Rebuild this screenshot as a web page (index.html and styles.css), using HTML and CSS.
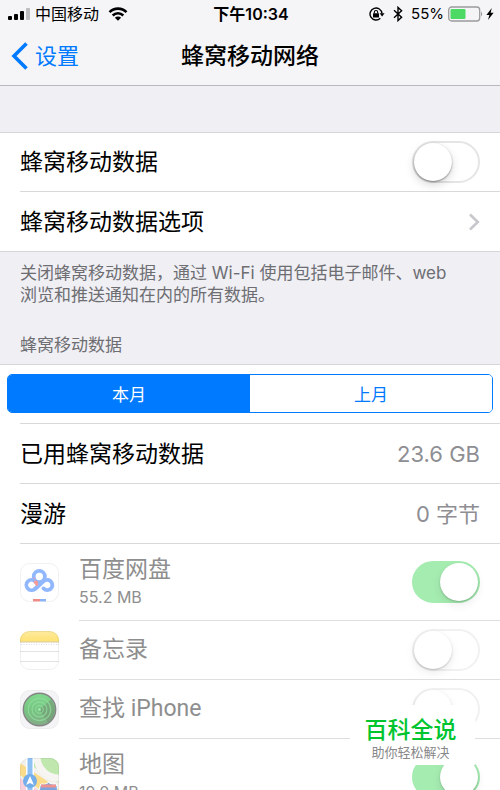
FILE: index.html
```html
<!DOCTYPE html>
<html lang="zh-CN">
<head>
    <meta charset="UTF-8">
    <meta name="viewport" content="width=device-width, initial-scale=1.0">
    <title>蜂窝移动网络</title>
    <link rel="stylesheet" href="styles.css">
</head>
<body>
    <header>
        <div class="status-bar">
            <div class="status-left">
                <svg width="22" height="14" viewBox="0 0 22 14">
                    <rect x="0" y="9" width="4" height="4" rx="1"/>
                    <rect x="6" y="7" width="4" height="6" rx="1"/>
                    <rect x="12" y="4" width="4" height="9" rx="1"/>
                    <rect x="18" y="1" width="4" height="12" rx="1" fill="#bcbcbe"/>
                </svg>
                <span class="carrier">中国移动</span>
                <svg width="20" height="14" viewBox="0 0 20 14" fill="none" stroke="#000" stroke-width="2.6">
                    <path d="M1.5 5.2a12 12 0 0 1 17 0"/>
                    <path d="M4.7 8.5a7.5 7.5 0 0 1 10.6 0"/>
                    <path d="M10 13.8L6.9 10.7a4.4 4.4 0 0 1 6.2 0z" fill="#000" stroke="none"/>
                </svg>
            </div>
            <div class="status-time">下午10:34</div>
            <div class="status-right">
                <svg width="16" height="14" viewBox="0 0 16 14" fill="none" stroke="#000" stroke-width="1.4">
                    <path d="M11.3 11.2A6 6 0 1 1 13 6.5"/>
                    <path d="M10.6 6.2h5l-2.5 3.2z" fill="#000" stroke="none"/>
                    <rect x="4" y="6.2" width="6" height="4.3" rx=".6" fill="#000" stroke="none"/>
                    <path d="M5.3 6.5V5.2a1.7 1.7 0 0 1 3.4 0v1.3" stroke-width="1.1"/>
                </svg>
                <svg class="bluetooth" width="10" height="16" viewBox="0 0 10 16" fill="none" stroke="#000" stroke-width="1.4">
                    <path d="M1 4.3l7.6 7L5 14.6V1.4l3.6 3.3L1 11.7"/>
                </svg>
                <span class="percent">55%</span>
                <svg width="36" height="16" viewBox="0 0 36 16">
                    <rect x=".7" y="1" width="31" height="14" rx="3" fill="none" stroke="#9b9b9d" stroke-width="1.3"/>
                    <rect x="2.5" y="3" width="15" height="10" rx="1" fill="#4cd964"/>
                    <path d="M33 5.5q2.4 2.5 0 5z" fill="#9b9b9d"/>
                </svg>
                <svg class="bolt" width="8" height="14" viewBox="0 0 8 14">
                    <path d="M5.8 1L.4 8h3L2 13l5.6-7.2h-3z"/>
                </svg>
            </div>
        </div>
        <nav class="nav-bar">
            <a href="#" class="back">
                <svg width="18" height="28" viewBox="0 0 18 28" fill="none" stroke="#007aff" stroke-width="3.6">
                    <path d="M15.5 1.5L3 14l12.5 12.5"/>
                </svg>
                设置
            </a>
            <h1>蜂窝移动网络</h1>
        </nav>
    </header>

    <main>
        <section class="group">
            <div class="row row-switch">
                <label for="cellular">蜂窝移动数据</label>
                <input type="checkbox" class="switch" id="cellular">
            </div>
            <a href="#" class="row">
                <span>蜂窝移动数据选项</span>
                <svg width="12" height="18" viewBox="0 0 12 18" fill="none" stroke="#c7c7cc" stroke-width="2.6">
                    <path d="M2 1.5L9.8 9 2 16.5"/>
                </svg>
            </a>
        </section>
        <p class="note">关闭蜂窝移动数据，通过 Wi-Fi 使用包括电子邮件、web 浏览和推送通知在内的所有数据。</p>
        <h2>蜂窝移动数据</h2>

        <section class="group usage">
            <div class="segments">
                <button type="button" class="active">本月</button>
                <button type="button">上月</button>
            </div>
            <div class="row first">
                <span>已用蜂窝移动数据</span>
                <span class="value">23.6 GB</span>
            </div>
            <div class="row">
                <span>漫游</span>
                <span class="value">0 字节</span>
            </div>

            <div class="app">
                <svg class="app-icon" viewBox="0 0 39 39">
                    <rect x=".5" y=".5" width="38" height="38" rx="9" fill="#fff" stroke="#f1f1f1"/>
                    <g fill="none" stroke="#91b8ff" stroke-width="3.8">
                        <circle cx="19.3" cy="13.5" r="5.6"/>
                        <path d="M12.6 15.6l4.8 5.6" stroke="#f39c98"/>
                        <path d="M23.3 17.8L14.9 26a5.2 5.2 0 1 1 .2-7.8"/>
                        <path d="M14.9 26l8.8-7.9a5.2 5.2 0 1 1 3.9 9.1q-2.4 0-4.1-1.8" stroke-linecap="round"/>
                    </g>
                    <path d="M13.6 17.2l2.8 1.2 2 3-2 2z" fill="#f39c98"/>
                    <rect x="13" y="36" width="7" height="2.4" fill="#f18a86"/>
                    <rect x="20" y="36" width="6" height="2.4" fill="#8bb3f5"/>
                </svg>
                <div class="row row-tall">
                    <label for="app-pan">百度网盘<small>55.2 MB</small></label>
                    <input type="checkbox" class="switch" id="app-pan" checked>
                </div>
            </div>
            <div class="app">
                <svg class="app-icon" viewBox="0 0 39 39">
                    <defs>
                        <clipPath id="tile"><rect width="39" height="39" rx="9"/></clipPath>
                        <linearGradient id="yellow" x2="0" y2="1">
                            <stop stop-color="#fdeaa0"/>
                            <stop offset="1" stop-color="#ffe270"/>
                        </linearGradient>
                    </defs>
                    <g clip-path="url(#tile)">
                        <rect width="39" height="39" fill="#fff"/>
                        <rect width="39" height="11" fill="url(#yellow)"/>
                        <path d="M0 11h39" stroke="#d5cba8"/>
                        <path d="M1 13.5h38" stroke="#dcdcdc" stroke-dasharray="1 1.5"/>
                        <path d="M0 20.5h39M0 30.5h39" stroke="#e3e3e3"/>
                    </g>
                    <rect x=".5" y=".5" width="38" height="38" rx="9" fill="none" stroke="#000" stroke-opacity=".06"/>
                </svg>
                <div class="row row-switch">
                    <label for="app-notes">备忘录</label>
                    <input type="checkbox" class="switch" id="app-notes">
                </div>
            </div>
            <div class="app">
                <svg class="app-icon" viewBox="0 0 39 39">
                    <defs>
                        <linearGradient id="radar" x2="0" y2="1">
                            <stop stop-color="#80d98e"/>
                            <stop offset=".55" stop-color="#77c383"/>
                            <stop offset="1" stop-color="#84ab87"/>
                        </linearGradient>
                    </defs>
                    <rect x=".5" y=".5" width="38" height="38" rx="9" fill="#f4f4f6" stroke="#ededef"/>
                    <circle cx="19.5" cy="19.5" r="16.2" fill="url(#radar)" stroke="#858585" stroke-width="1.4"/>
                    <path d="M19.5 19.5L31 9.4a15.4 15.4 0 0 1-3 23z" fill="#759477" opacity=".6"/>
                    <g fill="none" stroke="#91df9c" stroke-width="1.2" opacity=".75">
                        <circle cx="19.5" cy="19.5" r="3.8"/>
                        <circle cx="19.5" cy="19.5" r="7.4"/>
                        <circle cx="19.5" cy="19.5" r="11.2"/>
                    </g>
                    <circle cx="19.5" cy="19.5" r="1.3" fill="#a6efb0"/>
                </svg>
                <div class="row row-switch">
                    <label for="app-find">查找 iPhone</label>
                    <input type="checkbox" class="switch" id="app-find">
                </div>
            </div>
            <div class="app">
                <svg class="app-icon" viewBox="0 0 39 39">
                    <g clip-path="url(#tile)">
                        <rect width="39" height="39" fill="#f3f1ec"/>
                        <path d="M14 0h25v25L14 9z" fill="#c0e8ae"/>
                        <path d="M17 0a22 22 0 0 0 22 20" fill="none" stroke="#f6f5f2" stroke-width="7"/>
                        <path d="M27 0h12v11A12 12 0 0 1 27 0z" fill="#c0e8ae"/>
                        <path d="M0 5l39 26v8h-9L0 17z" fill="#fbdc8a"/>
                        <path d="M0 20l18 12v7H0z" fill="#f8cfdb"/>
                        <path d="M10 0v39" stroke="#fff" stroke-width="8"/>
                        <path d="M10 0v39" stroke="#8fc1f5" stroke-width="5"/>
                        <circle cx="10" cy="23" r="7" fill="#74aeea"/>
                        <path d="M10 18l4 9-4-2-4 2z" fill="#fff"/>
                        <path d="M21 26q4 1 7.5-1.5Q32 27 36 26q3 5 0 13H21q-3-8 0-13z" fill="#7ca5de" stroke="#fff"/>
                        <path d="M21 28h15" stroke="#ee9290" stroke-width="3"/>
                        <text x="22" y="37" class="shield">280</text>
                    </g>
                    <rect x=".5" y=".5" width="38" height="38" rx="9" fill="none" stroke="#000" stroke-opacity=".05"/>
                </svg>
                <div class="row row-tall">
                    <label for="app-maps">地图<small>19.0 MB</small></label>
                    <input type="checkbox" class="switch" id="app-maps" checked>
                </div>
            </div>
        </section>
    </main>

    <aside class="brand">
        <strong>百科全说</strong>
        <span>助你轻松解决</span>
    </aside>
</body>
</html>
```
FILE: styles.css
```css
* {
    box-sizing: border-box;
}

body {
    font-family: Inter, 'Noto Sans CJK SC', sans-serif;
    margin: 0;
    height: 100vh;
    overflow: hidden;
    background-color: #efeff4;
    color: #000;
    font-size: 23px;
    line-height: 30px;
}

a {
    color: inherit;
    text-decoration: none;
}

svg {
    display: block;
    flex-shrink: 0;
}

header {
    background-color: #f5f5f7;
    border-bottom: 1px solid #b9b9bc;
}

.status-bar {
    display: grid;
    grid-template-columns: 1fr auto 1fr;
    align-items: center;
    height: 28px;
    padding: 0 6px 0 8px;
    font-size: 16px;
    line-height: 28px;
}

.status-left, .status-right {
    display: flex;
    align-items: center;
}

.carrier {
    margin: 0 9px 0 5px;
}

.status-time {
    font-weight: 600;
}

.status-right {
    justify-content: flex-end;
}

.bluetooth {
    margin: 0 8px;
}

.percent {
    margin-right: 4px;
    font-size: 15px;
}

.bolt {
    margin-left: 2px;
}

.nav-bar {
    display: grid;
    grid-template-columns: 1fr auto 1fr;
    align-items: center;
    height: 57px;
    padding: 0 11px 2px;
}

.back {
    display: flex;
    align-items: center;
    gap: 6px;
    color: #007aff;
    font-size: 22px;
}

h1 {
    margin: 0;
    font-size: 23px;
    font-weight: 500;
}

main {
    padding-top: 46px;
}

.group {
    background-color: #fff;
    border-top: 1px solid #d6d6da;
    border-bottom: 1px solid #d6d6da;
}

.row {
    display: flex;
    align-items: center;
    justify-content: space-between;
    height: 60px;
    margin-left: 20px;
    padding-right: 20px;
    border-bottom: 1px solid #d9d9dc;
}

.row:last-child {
    border-bottom: none;
}

.group > .row:last-child {
    height: 59px;
}

.app .row {
    flex: 1;
    margin-left: 20px;
    border-bottom: 1px solid #dedee0;
}

.row-switch {
    height: 59px;
}

.row-tall {
    height: 77px;
}

.first {
    height: 61px;
    border-top: 1px solid #d9d9dc;
}

.value {
    color: #8e8e93;
    font-size: 22px;
}

.note, h2 {
    margin: 0;
    padding: 0 20px;
    color: #6d6d72;
    font-size: 17px;
    font-weight: 400;
    line-height: 22px;
}

.note {
    padding-top: 10px;
    padding-right: 40px;
}

h2 {
    padding-top: 28px;
    padding-bottom: 8px;
}

.segments {
    display: flex;
    height: 39px;
    margin: 9px 7px 10px;
    border: 1px solid #007aff;
    border-radius: 5px;
    overflow: hidden;
}

.segments button {
    flex: 1;
    padding: 0;
    border: none;
    background-color: #fff;
    color: #007aff;
    font-family: inherit;
    font-size: 17px;
}

.segments .active {
    background-color: #007aff;
    color: #fff;
}

.app {
    display: flex;
    align-items: center;
    padding-left: 20px;
    color: #8e8e8e;
    font-family: Roboto, 'Noto Sans CJK SC', sans-serif;
}

.app-icon {
    width: 39px;
    height: 39px;
}

small {
    display: block;
    font-family: Inter, sans-serif;
    font-size: 16px;
    line-height: 24px;
}

.shield {
    fill: #fff;
    font-size: 7px;
    font-weight: 700;
}

.switch {
    appearance: none;
    position: relative;
    width: 68px;
    height: 42px;
    margin: 0;
    border: 2px solid #e5e5e5;
    border-radius: 21px;
    background-color: #fff;
}

.switch::before {
    content: "";
    position: absolute;
    top: 0;
    left: 0;
    width: 38px;
    height: 38px;
    border-radius: 50%;
    background-color: #fff;
    box-shadow: 0 1px 2px rgba(0, 0, 0, 0.4), 0 4px 10px rgba(0, 0, 0, 0.15);
}

.switch:checked {
    border-color: #a5ecb1;
    background-color: #a5ecb1;
}

.switch:checked::before {
    left: 26px;
}

.app .switch:not(:checked) {
    border-color: #f1f1f1;
}

.app .switch::before {
    box-shadow: 0 1px 2px rgba(0, 0, 0, 0.2), 0 4px 10px rgba(0, 0, 0, 0.08);
}

/* channel label in the corner, over the list */
.brand {
    position: fixed;
    right: 25px;
    bottom: 25px;
    display: flex;
    flex-direction: column;
    align-items: center;
    width: 125px;
    height: 60px;
    padding: 11px 4px 0 0;
    background-color: #fff;
    color: #888;
    font-size: 13px;
    line-height: 16px;
}

.brand strong {
    color: #00c52f;
    font-size: 23px;
    font-weight: 500;
    line-height: 28px;
}
```
